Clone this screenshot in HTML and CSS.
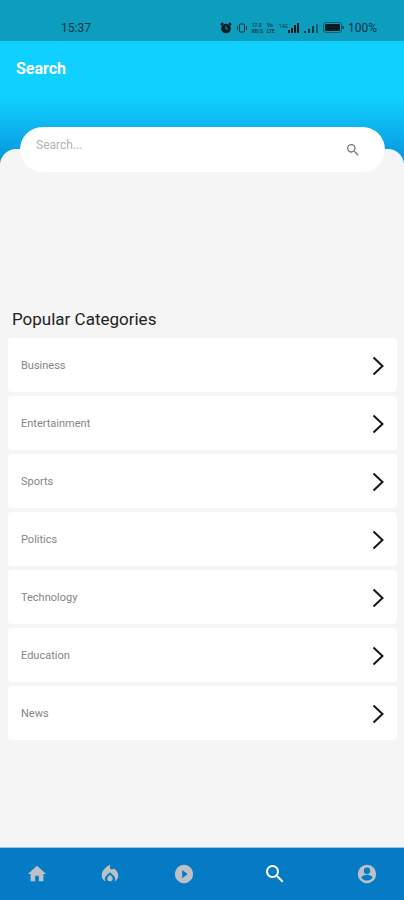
FILE: index.html
```html
<!DOCTYPE html>
<html lang="en">
<head>
<meta charset="utf-8">
<meta name="viewport" content="width=device-width, initial-scale=1">
<title>Search</title>
<link rel="stylesheet" href="styles.css">
</head>
<body>
<div class="status">
  <span class="clock">15:37</span>
  <div class="indicators">
    <svg width="12" height="12" viewBox="0 0 12 12"><path d="M1 3 3 1M11 3 9 1" stroke="#0a1c22" stroke-width="2"/><circle cx="6" cy="6.500" r="4.800" fill="#0a1c22"/><path d="M6 4v3h2.200" fill="none" stroke="#0c9dbf"/></svg>
    <svg width="12" height="12" viewBox="0 0 12 12" fill="none" stroke="currentColor"><rect x="3.500" y="2" width="5" height="8" rx="1"/><path d="M1.500 4v4M10.500 4v4"/></svg>
    <span class="stack"><span>17.0</span><span>KB/S</span></span>
    <span class="stack"><span>Vo</span><span>LTE</span></span>
    <div class="signal"><span class="tiny">14G</span><svg width="12" height="10" viewBox="0 0 12 10" fill="#0a1c22"><path d="M0 7h2v3H0zM3 5h2v5H3zM6 2h2v8H6zM9 0h2v10H9z"/></svg></div>
    <svg width="15" height="10" viewBox="0 0 15 10" fill="currentColor"><path d="M0 8h2v2H0zM4 6h2v4H4zM8 3h2v7H8z"/><path d="M12 1h2v9h-2z" opacity=".6"/></svg>
    <svg width="21" height="11" viewBox="0 0 21 11"><rect x=".5" y=".5" width="18" height="10" rx="2.500" fill="none" stroke="currentColor" opacity=".6"/><rect x="2" y="2" width="15" height="7" rx="1" fill="#0a1c22"/><path d="M20 4v3" stroke="currentColor" stroke-width="1.500"/></svg>
    <span class="percent">100%</span>
  </div>
</div>
<header class="header"><h1>Search</h1></header>
<main class="main">
  <form class="search">
    <input type="search" placeholder="Search..." aria-label="Search">
    <button type="button" aria-label="Submit search"><svg width="16" height="16" viewBox="0 0 24 24" fill="currentColor"><path d="M15.500 14h-.79l-.28-.27A6.500 6.500 0 1 0 13.730 14.430l.27.28v.79l5 4.990L20.490 19zM9.500 14a4.500 4.500 0 1 1 0-9 4.500 4.500 0 0 1 0 9z"/></svg></button>
  </form>
  <section class="panel">
    <h2>Popular Categories</h2>
    <nav class="list" aria-label="Popular Categories">
      <a class="card" href="#business">Business<svg class="chevron" viewBox="0 0 12 20"><path d="M1.500 1.500 10.500 10l-9 8.500"/></svg></a>
      <a class="card" href="#entertainment">Entertainment<svg class="chevron" viewBox="0 0 12 20"><path d="M1.500 1.500 10.500 10l-9 8.500"/></svg></a>
      <a class="card" href="#sports">Sports<svg class="chevron" viewBox="0 0 12 20"><path d="M1.500 1.500 10.500 10l-9 8.500"/></svg></a>
      <a class="card" href="#politics">Politics<svg class="chevron" viewBox="0 0 12 20"><path d="M1.500 1.500 10.500 10l-9 8.500"/></svg></a>
      <a class="card" href="#technology">Technology<svg class="chevron" viewBox="0 0 12 20"><path d="M1.500 1.500 10.500 10l-9 8.500"/></svg></a>
      <a class="card" href="#education">Education<svg class="chevron" viewBox="0 0 12 20"><path d="M1.500 1.500 10.500 10l-9 8.500"/></svg></a>
      <a class="card" href="#news">News<svg class="chevron" viewBox="0 0 12 20"><path d="M1.500 1.500 10.500 10l-9 8.500"/></svg></a>
    </nav>
  </section>
</main>
<nav class="tabs" aria-label="Main">
  <a class="tab" href="#home" aria-label="Home"><svg viewBox="0 0 24 24"><path d="M10 20v-6h4v6h5v-8h3L12 3 2 12h3v8z"/></svg></a>
  <a class="tab" href="#trending" aria-label="Trending"><svg viewBox="0 0 24 24"><path d="M12 2S3 6 3 13.500c0 3 1.700 5.300 4 6.500a5 5 0 0 1 1-6L12 10.100l4 3.900a5 5 0 0 1 1 6c2.300-1.200 4-3.500 4-6.500 0-3-2-6-5-7.500-1.500 2-4 1-4-.7z"/><path d="M12 12.900l-2.130 2.090A2.940 2.940 0 0 0 12 20a2.940 2.940 0 0 0 2.130-5.010z"/></svg></a>
  <a class="tab" href="#videos" aria-label="Videos"><svg viewBox="0 0 24 24"><path d="M12 2a10 10 0 1 0 0 20 10 10 0 0 0 0-20zM10 16.500v-9l6 4.500z"/></svg></a>
  <a class="tab active" href="#search" aria-label="Search" aria-current="page"><svg viewBox="0 0 24 24"><path d="M15.500 14h-.79l-.28-.27A6.500 6.500 0 1 0 13.730 14.430l.27.28v.79l5 4.990L20.490 19zM9.500 14a4.500 4.500 0 1 1 0-9 4.500 4.500 0 0 1 0 9z"/></svg></a>
  <a class="tab" href="#profile" aria-label="Profile"><svg viewBox="0 0 24 24"><path d="M12 2a10 10 0 1 0 0 20 10 10 0 0 0 0-20zm0 3a3.500 3.500 0 1 1 0 7 3.500 3.500 0 0 1 0-7zm0 14.200a7.200 7.200 0 0 1-6-3.220c.03-1.990 4-3.080 6-3.080s5.970 1.090 6 3.080a7.200 7.200 0 0 1-6 3.220z"/></svg></a>
</nav>
</body>
</html>
```
FILE: styles.css
```css
* {
  box-sizing: border-box;
}

body {
  margin: 0;
  min-height: 100vh;
  display: flex;
  flex-direction: column;
  background: #f5f5f5;
  color: #222;
  font-family: Roboto, "Liberation Sans", sans-serif;
}

a {
  text-decoration: none;
}

svg {
  display: block;
  flex-shrink: 0;
}

h1,
h2 {
  margin: 0;
}

.status {
  display: flex;
  justify-content: space-between;
  align-items: center;
  height: 41px;
  padding: 14px 27px 0 61px;
  background: #0c9dbf;
  color: #123440;
}

.clock {
  font-size: 12px;
  line-height: 16px;
}

.indicators {
  display: flex;
  align-items: center;
  gap: 4px;
}

.stack {
  display: flex;
  flex-direction: column;
  font-size: 5px;
  font-weight: 500;
  line-height: 6px;
}

.signal {
  display: flex;
}

.tiny {
  font-size: 5px;
  line-height: 6px;
}

.percent {
  font-size: 12px;
  line-height: 16px;
}

.header {
  height: 56px;
  padding: 16px;
  background: #10d0ff;
  color: #fff;
}

.header h1 {
  font-size: 16px;
  line-height: 24px;
}

.main {
  flex: 1;
  display: flex;
  flex-direction: column;
  padding-top: 30px;
  background: linear-gradient(#10d0ff, #0796dc 64px, #0796dc 72px, #f5f5f5 72px);
}

.search {
  position: relative;
  z-index: 1;
  display: flex;
  align-items: center;
  height: 45px;
  margin: 0 19px -23px 20px;
  padding: 0 24px 0 16px;
  border-radius: 23px;
  background: #fff;
}

.search input {
  flex: 1;
  min-width: 0;
  padding: 0 0 10px;
  border: 0;
  outline: 0;
  background: none;
  color: #333;
  font: 12px/16px Roboto, sans-serif;
}

.search input::placeholder {
  color: #b4b4b4;
}

.search button {
  padding: 0;
  border: 0;
  background: none;
  color: #777;
}

.panel {
  flex: 1;
  padding: 158px 7px 16px 8px;
  border-radius: 16px 16px 0 0;
  background: #f5f5f5;
}

.panel h2 {
  padding: 0 4px 7px;
  font-size: 17px;
  font-weight: 400;
  line-height: 24px;
}

.list {
  display: flex;
  flex-direction: column;
  gap: 4px;
}

.card {
  display: flex;
  align-items: center;
  justify-content: space-between;
  height: 54px;
  padding: 2px 13px 0;
  border-radius: 4px;
  background: #fff;
  color: #858585;
  font-size: 11px;
  line-height: 16px;
}

.chevron {
  width: 12px;
  height: 20px;
  fill: none;
  stroke: #161616;
  stroke-width: 2;
}

.tabs {
  display: flex;
  height: 53px;
  border-top: 1px solid #9fc4dc;
  background: #047bc4;
}

.tab {
  flex: 2;
  display: flex;
  align-items: center;
  justify-content: center;
  color: #bdc1c6;
}

.tab svg {
  width: 22px;
  height: 22px;
  fill: currentColor;
}

.tab.active {
  flex: 3;
  color: #fff;
}

.tab.active svg {
  width: 24px;
  height: 24px;
}
```
